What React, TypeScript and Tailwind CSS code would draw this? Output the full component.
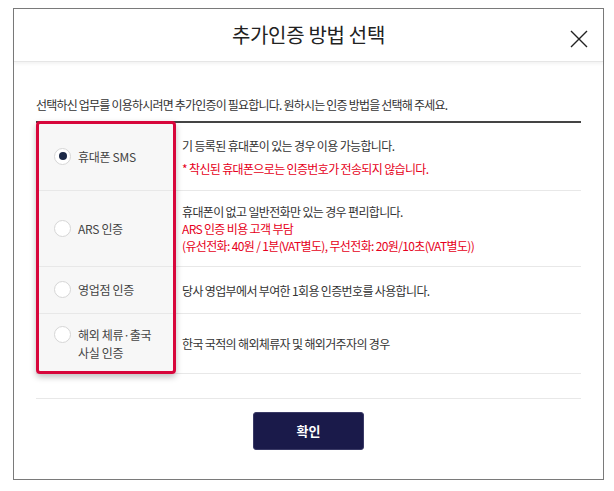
type Method = {
  label: string[];
  checked?: boolean;
  height: string;
  lines: { text: string; red?: boolean }[];
  gap?: boolean;
};

const methods: Method[] = [
  {
    label: ["휴대폰 SMS"],
    checked: true,
    height: "h-[68px]",
    gap: true,
    lines: [
      { text: "기 등록된 휴대폰이 있는 경우 이용 가능합니다." },
      { text: "* 착신된 휴대폰으로는 인증번호가 전송되지 않습니다.", red: true },
    ],
  },
  {
    label: ["ARS 인증"],
    height: "h-[76px]",
    lines: [
      { text: "휴대폰이 없고 일반전화만 있는 경우 편리합니다." },
      { text: "ARS 인증 비용 고객 부담", red: true },
      { text: "(유선전화: 40원 / 1분(VAT별도), 무선전화: 20원/10초(VAT별도))", red: true },
    ],
  },
  {
    label: ["영업점 인증"],
    height: "h-[47px]",
    lines: [{ text: "당사 영업부에서 부여한 1회용 인증번호를 사용합니다." }],
  },
  {
    label: ["해외 체류·출국", "사실 인증"],
    height: "h-[60px]",
    lines: [{ text: "한국 국적의 해외체류자 및 해외거주자의 경우" }],
  },
];

function Radio({ checked }: { checked?: boolean }) {
  return (
    <span className="flex h-[17px] w-[17px] shrink-0 items-center justify-center rounded-full border border-[#d6d6d6] bg-white">
      {checked && <span className="h-[8px] w-[8px] rounded-full bg-[#1b2846]" />}
    </span>
  );
}

export default function App() {
  return (
    <div
      className="h-[491px] w-[614px] bg-white pl-[13px] pt-[8px] text-[#333]"
      style={{ fontFamily: '"Noto Sans CJK KR", "Noto Sans", sans-serif' }}
    >
      <div className="flex h-[472px] w-[591px] flex-col border border-[#7a7a7a] bg-white">
        {/* header */}
        <div className="relative flex h-[53px] shrink-0 items-center justify-center border-b border-[#e6e6e6] shadow-[0_2px_3px_rgba(0,0,0,0.05)]">
          <h1 className="text-[20px] font-normal tracking-[-0.3px] text-[#222]">추가인증 방법 선택</h1>
          <button className="absolute right-[15px] top-[21px] text-[#222]">
            <svg width="18" height="18" viewBox="0 0 18 18" fill="none" stroke="currentColor" strokeWidth="1.4">
              <path d="M1 1 L17 17 M17 1 L1 17" />
            </svg>
          </button>
        </div>

        <div className="flex flex-1 flex-col px-[22px]">
          <p className="mt-[34px] text-[12px] leading-[17px] tracking-[-0.8px] text-[#333]">
            선택하신 업무를 이용하시려면 추가인증이 필요합니다. 원하시는 인증 방법을 선택해 주세요.
          </p>

          {/* table */}
          <div className="relative mt-[8px] border-t-2 border-[#444]">
            {methods.map((m, i) => (
              <div key={i} className={`flex ${m.height} border-b border-[#e8e8e8]`}>
                <div className="flex w-[139px] shrink-0 items-center bg-[#f7f7f7] pl-[18px]">
                  <div className="flex items-start gap-[7px]">
                    <Radio checked={m.checked} />
                    <span className="text-[12px] leading-[18px] tracking-[-0.3px] text-[#444]">
                      {m.label.map((l, j) => (
                        <span key={j} className="block">
                          {l}
                        </span>
                      ))}
                    </span>
                  </div>
                </div>
                <div className={`flex flex-col justify-center pl-[7px] ${m.gap ? "gap-[6px]" : ""}`}>
                  {m.lines.map((l, j) => (
                    <p
                      key={j}
                      className={`text-[12px] leading-[17px] tracking-[-0.65px] ${
                        l.red ? "text-[#e60020]" : "text-[#333]"
                      }`}
                    >
                      {l.text}
                    </p>
                  ))}
                </div>
              </div>
            ))}
            {/* highlight on the method column */}
            <div className="pointer-events-none absolute -top-[2px] bottom-0 left-0 w-[140px] rounded-[4px] border-[3px] border-[#d7063b] shadow-[0_3px_6px_rgba(0,0,0,0.25)]" />
          </div>

          <div className="mt-[24px] border-t border-[#e8e8e8]" />

          <div className="flex justify-center pt-[13px]">
            <button className="h-[38px] w-[111px] rounded-[3px] border border-[#3a3a66] bg-[#1a1a4a] text-[13px] font-bold text-white">
              확인
            </button>
          </div>
        </div>
      </div>
    </div>
  );
}
